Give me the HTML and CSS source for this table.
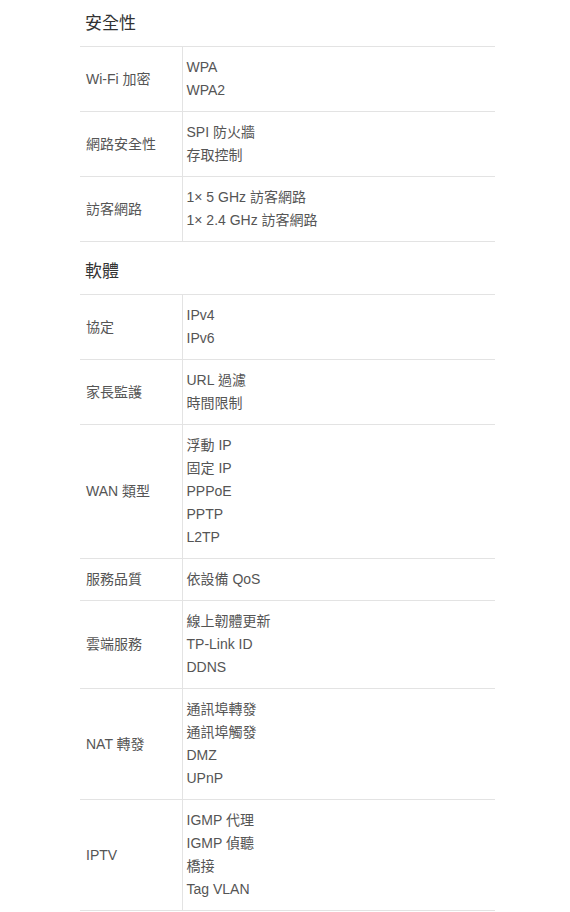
FILE: index.html
```html
<!DOCTYPE html>
<html lang="zh-Hant">
<head>
  <meta charset="UTF-8">
  <meta name="viewport" content="width=device-width, initial-scale=1">
  <title>規格</title>
  <link rel="stylesheet" href="styles.css">
</head>
<body>

  <div class="specs">
    <h3 class="specs-title first">安全性</h3>
    <table class="spec-table">
      <tr><td class="name">Wi-Fi 加密</td><td class="value">WPA<br>WPA2</td></tr>
      <tr><td class="name">網路安全性</td><td class="value">SPI 防火牆<br>存取控制</td></tr>
      <tr><td class="name">訪客網路</td><td class="value">1× 5 GHz 訪客網路<br>1× 2.4 GHz 訪客網路</td></tr>
    </table>

    <h3 class="specs-title">軟體</h3>
    <table class="spec-table">
      <tr><td class="name">協定</td><td class="value">IPv4<br>IPv6</td></tr>
      <tr><td class="name">家長監護</td><td class="value">URL 過濾<br>時間限制</td></tr>
      <tr><td class="name">WAN 類型</td><td class="value">浮動 IP<br>固定 IP<br>PPPoE<br>PPTP<br>L2TP</td></tr>
      <tr><td class="name">服務品質</td><td class="value">依設備 QoS</td></tr>
      <tr><td class="name">雲端服務</td><td class="value">線上韌體更新<br>TP-Link ID<br>DDNS</td></tr>
      <tr><td class="name">NAT 轉發</td><td class="value">通訊埠轉發<br>通訊埠觸發<br>DMZ<br>UPnP</td></tr>
      <tr><td class="name">IPTV</td><td class="value">IGMP 代理<br>IGMP 偵聽<br>橋接<br>Tag VLAN</td></tr>
    </table>
  </div>

</body>
</html>
```

FILE: styles.css
```css
* { box-sizing: border-box; margin: 0; padding: 0; }

body {
  font-family: 'Liberation Sans', Arial, 'Noto Sans CJK TC', sans-serif;
  background: #fff;
  color: #555;
  font-size: 14px;
  line-height: 23px;
}

.specs {
  width: 415px;
  margin-left: 80px;
}

.specs-title {
  font-size: 17px;
  font-weight: normal;
  line-height: 24px;
  color: #333;
  padding: 18px 5px 10px;
  border-bottom: 1px solid #e3e3e3;
}
.specs-title.first {
  padding-top: 12px;
}

.spec-table {
  width: 100%;
  border-collapse: collapse;
}
.spec-table td {
  border-bottom: 1px solid #e3e3e3;
  padding: 9px 5px;
  vertical-align: middle;
}
.spec-table .name {
  width: 102px;
  padding-left: 6px;
  border-right: 1px solid #e3e3e3;
}
.spec-table .value {
  padding-left: 4px;
}
```
